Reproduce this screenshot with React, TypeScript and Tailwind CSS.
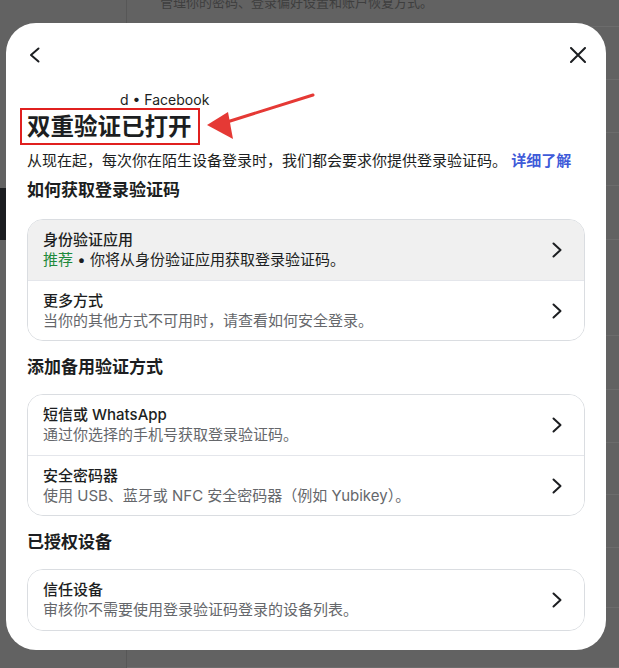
/**
 * 双重验证设置弹窗（背景为变暗的设置页）
 */

const FONT = { fontFamily: 'Inter, "Noto Sans CJK SC", sans-serif' }

/** 右箭头 */
function ChevronRight() {
  return (
    <svg width="10" height="16" viewBox="0 0 10 16" fill="none">
      <path d="M1.5 1.5 L8.5 8 L1.5 14.5" stroke="#1c1e21" strokeWidth="2" strokeLinecap="round" strokeLinejoin="round" />
    </svg>
  )
}

/** 返回箭头 */
function ChevronLeft() {
  return (
    <svg width="11" height="16" viewBox="0 0 11 16" fill="none">
      <path d="M9.5 1.5 L2 8 L9.5 14.5" stroke="#1c1e21" strokeWidth="2" strokeLinecap="round" strokeLinejoin="round" />
    </svg>
  )
}

/** 关闭 */
function CloseIcon() {
  return (
    <svg width="16" height="16" viewBox="0 0 16 16" fill="none">
      <path d="M1 1 L15 15 M15 1 L1 15" stroke="#1c1e21" strokeWidth="2" strokeLinecap="round" />
    </svg>
  )
}

interface RowProps {
  title: string
  sub: React.ReactNode
  active?: boolean
  first?: boolean
}

/** 卡片中的一行 */
function Row({ title, sub, active, first }: RowProps) {
  return (
    <div
      className={`h-[60px] flex items-center justify-between pl-[15px] pr-[22px] ${first ? '' : 'border-t border-[#e4e6eb]'} ${active ? 'bg-[#f0f0f0]' : 'bg-white'}`}
    >
      <div className="flex flex-col">
        <div className="text-[15px] leading-[20px] font-medium text-[#1c1e21]">{title}</div>
        <div className="text-[15px] leading-[20px] text-[#65676b]">{sub}</div>
      </div>
      <ChevronRight />
    </div>
  )
}

function SectionTitle({ children }: { children: React.ReactNode }) {
  return <div className="text-[17px] leading-[22px] font-bold text-[#1c1e21]">{children}</div>
}

// 背景设置页右侧列表的行高
const BG_ROWS = [53, 53, 53, 54, 96, 54, 53, 52, 53, 60, 60]

export default function App() {
  return (
    <div className="relative w-[619px] h-[668px] overflow-hidden bg-[#626262] flex" style={FONT}>
      {/* 背景：侧栏 */}
      <div className="w-[127px] shrink-0 border-r border-[#575757] flex flex-col">
        <div className="h-[188px]" />
        <div className="h-[52px] bg-[#1b1d20]" />
      </div>
      {/* 背景：主区域 */}
      <div className="flex-1 flex flex-col">
        <div className="h-[29px] border-b border-[#6c6c6c] pl-[33px]">
          <div className="-mt-[8px] text-[13px] leading-[20px] text-[#3e3e3e] whitespace-nowrap">
            管理你的密码、登录偏好设置和账户恢复方式。
          </div>
        </div>
        {BG_ROWS.map((h, i) => (
          <div key={i} className="shrink-0 border-b border-[#6c6c6c]" style={{ height: h }} />
        ))}
      </div>

      {/* 弹窗 */}
      <div className="absolute left-[6px] top-[23px] w-[600px] h-[627px] rounded-[30px] bg-white overflow-hidden">
        {/* 头部 */}
        <div className="flex items-center justify-between pl-[23px] pr-[20px] pt-[24px] h-[40px]">
          <ChevronLeft />
          <CloseIcon />
        </div>

        <div className="px-[21px] flex flex-col">
          <div className="mt-[28px] h-[18px] leading-[18px] text-[14px] text-[#1c1e21] pl-[93px]">d • Facebook</div>

          <div className="mt-[3px]">
            <div className="relative inline-block text-[23.5px] leading-[30px] font-semibold text-[#1c1e21]">
              双重验证已打开
              <div className="absolute -left-[7px] -top-[4px] -right-[8px] -bottom-[3px] border-[2.5px] border-[#e0201f]" />
            </div>
          </div>

          <div className="mt-[9px] text-[15px] leading-[20px] text-[#1c1e21] whitespace-nowrap">
            从现在起，每次你在陌生设备登录时，我们都会要求你提供登录验证码。{' '}
            <span className="font-semibold text-[#3f5bd9]">详细了解</span>
          </div>

          <div className="mt-[8px]">
            <SectionTitle>如何获取登录验证码</SectionTitle>
          </div>
          <div className="mt-[18px] border border-[#dadde1] rounded-[16px] overflow-hidden">
            <Row
              first
              active
              title="身份验证应用"
              sub={
                <>
                  <span className="text-[#1e8a3c]">推荐</span>
                  <span className="text-[#1c1e21]"> • 你将从身份验证应用获取登录验证码。</span>
                </>
              }
            />
            <Row title="更多方式" sub="当你的其他方式不可用时，请查看如何安全登录。" />
          </div>

          <div className="mt-[15px]">
            <SectionTitle>添加备用验证方式</SectionTitle>
          </div>
          <div className="mt-[16px] border border-[#dadde1] rounded-[16px] overflow-hidden">
            <Row first title="短信或 WhatsApp" sub="通过你选择的手机号获取登录验证码。" />
            <Row title="安全密码器" sub="使用 USB、蓝牙或 NFC 安全密码器（例如 Yubikey）。" />
          </div>

          <div className="mt-[15px]">
            <SectionTitle>已授权设备</SectionTitle>
          </div>
          <div className="mt-[16px] border border-[#dadde1] rounded-[16px] overflow-hidden">
            <Row first title="信任设备" sub="审核你不需要使用登录验证码登录的设备列表。" />
          </div>
        </div>

        {/* 标注箭头 */}
        <svg className="absolute left-[194px] top-[67px] pointer-events-none" width="118" height="52" viewBox="0 0 118 52">
          <line x1="113" y1="5" x2="27" y2="32" stroke="#e53935" strokeWidth="3" strokeLinecap="round" />
          <polygon points="7,35 28,22 33,49" fill="#e53935" />
        </svg>
      </div>
    </div>
  )
}
